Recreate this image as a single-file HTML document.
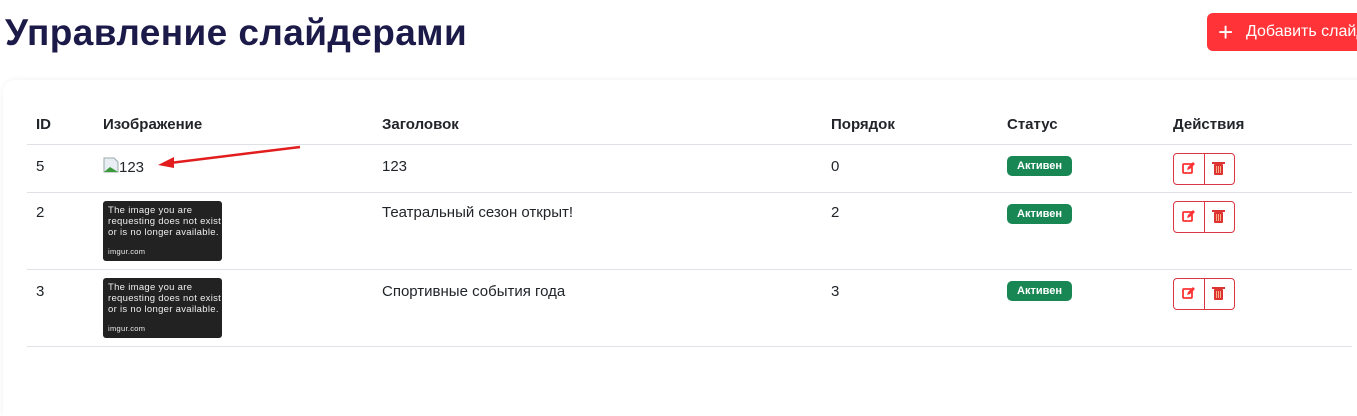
<!DOCTYPE html>
<html><head><meta charset="utf-8"><style>
*{margin:0;padding:0;box-sizing:border-box}
html,body{width:1357px;height:416px;overflow:hidden}
body{background:#fff;font-family:"Liberation Sans","Noto Sans CJK SC",sans-serif;position:relative;color:#212529}
.a{position:absolute;white-space:nowrap}
h1{position:absolute;left:5px;top:12px;font-size:37px;font-weight:bold;color:#1c1a48;letter-spacing:0.4px}
.btn{position:absolute;left:1207px;top:13px;width:170px;height:38px;background:#ff3338;border-radius:6px;color:#fff;font-size:16px}
.card{position:absolute;left:3px;top:80px;width:1400px;height:336px;border-radius:12px 0 0 0;background:#fff;box-shadow:0 0 6px rgba(0,0,0,0.06)}
.line{position:absolute;left:27px;width:1325px;height:1px;background:#dee2e6}
.th{font-weight:bold;font-size:15px;top:116px;color:#212529}
.td{font-size:15px}
.badge{position:absolute;left:1007px;width:65px;height:20px;background:#198754;border-radius:5px;color:#fff;font-size:11px;font-weight:bold;text-align:center;line-height:20px}
.acts{position:absolute;left:1173px;width:62px;height:32px;border:1px solid #dc3545;border-radius:4px}
.acts div{position:absolute;left:30px;top:0;width:1px;height:30px;background:#dc3545}
.img{position:absolute;left:103px;width:119px;height:60px;background:#222;border-radius:3px;color:#eee;font-size:9.5px;line-height:11px;padding:4px 0 0 5px;letter-spacing:0.3px}
.img span{display:block;font-size:7.5px;margin-top:8px}
</style></head><body>
<h1>Управление слайдерами</h1>
<div class="btn"><span class="a" style="left:11px;top:6px;font-size:26px;line-height:26px">+</span><span class="a" style="left:39px;top:10px">Добавить слайдер</span></div>
<div class="card"></div>
<div class="a th" style="left:36px">ID</div>
<div class="a th" style="left:103px">Изображение</div>
<div class="a th" style="left:382px">Заголовок</div>
<div class="a th" style="left:831px">Порядок</div>
<div class="a th" style="left:1007px">Статус</div>
<div class="a th" style="left:1173px">Действия</div>
<div class="line" style="top:144px"></div>
<div class="line" style="top:192px"></div>
<div class="line" style="top:269px"></div>
<div class="line" style="top:346px"></div>

<div class="a td" style="left:36px;top:158px">5</div>
<svg class="a" style="left:103px;top:157px" width="16" height="16"><path d="M1 1h10l4 4v10H1z" fill="#e8eef4" stroke="#9aa"/><path d="M1 15l6-5 8 5z" fill="#3a9a3a"/></svg>
<div class="a td" style="left:119px;top:159px">123</div>
<svg class="a" style="left:150px;top:140px" width="160" height="35"><line x1="150" y1="7" x2="20" y2="23" stroke="#e21d1d" stroke-width="2.5"/><path d="M8 25L24 17 24 28z" fill="#e21d1d"/></svg>
<div class="a td" style="left:382px;top:158px">123</div>
<div class="a td" style="left:831px;top:158px">0</div>
<div class="badge" style="top:156px">Активен</div>

<div class="a td" style="left:36px;top:204px">2</div>
<div class="img" style="top:201px">The image you are<br>requesting does not exist<br>or is no longer available.<span>imgur.com</span></div>
<div class="a td" style="left:382px;top:204px">Театральный сезон открыт!</div>
<div class="a td" style="left:831px;top:204px">2</div>
<div class="badge" style="top:204px">Активен</div>

<div class="a td" style="left:36px;top:283px">3</div>
<div class="img" style="top:278px">The image you are<br>requesting does not exist<br>or is no longer available.<span>imgur.com</span></div>
<div class="a td" style="left:382px;top:283px">Спортивные события года</div>
<div class="a td" style="left:831px;top:283px">3</div>
<div class="badge" style="top:281px">Активен</div>

<div class="acts" style="top:153px"><div></div></div>
<div class="acts" style="top:201px"><div></div></div>
<div class="acts" style="top:278px"><div></div></div>
<svg class="a" style="left:1181px;top:160px" width="50" height="150">
<g id="ic"><rect x="2" y="4" width="9" height="9" fill="none" stroke="#f33" stroke-width="1.8" rx="1"/><path d="M6 10l1-3 5-5 2 2-5 5z" fill="#f33"/>
<rect x="33" y="4" width="9" height="11" fill="#d33" rx="1"/><rect x="31" y="2" width="13" height="2" fill="#d33"/><path d="M35.5 6v7M37.5 6v7M39.5 6v7" stroke="#fc9" stroke-width="0.8"/></g>
<use href="#ic" y="48"/><use href="#ic" y="125"/>
</svg>
</body></html>
